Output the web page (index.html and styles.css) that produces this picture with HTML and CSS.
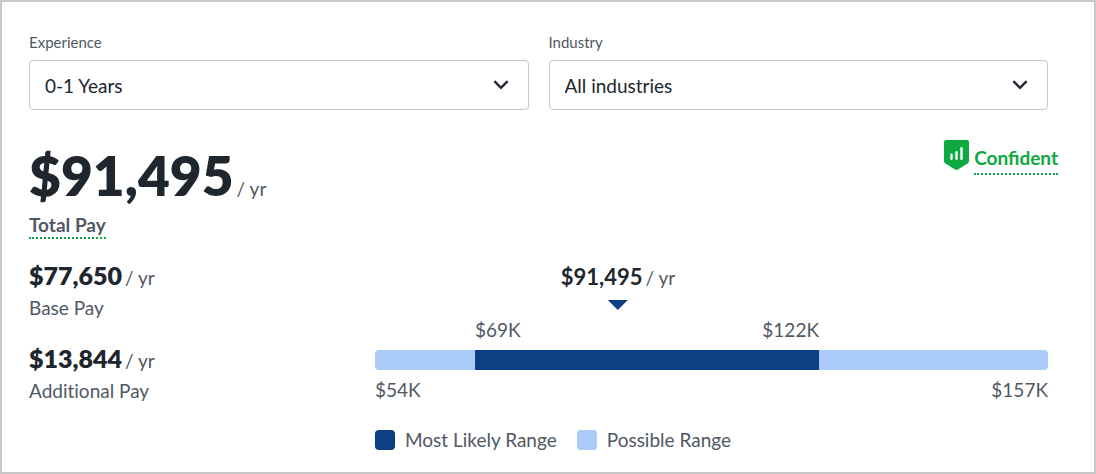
FILE: index.html
```html
<!DOCTYPE html>
<html lang="en">
<head>
  <meta charset="utf-8">
  <meta name="viewport" content="width=device-width, initial-scale=1">
  <title>Total Pay</title>
  <link rel="stylesheet" href="styles.css">
</head>
<body>
  <main class="card">
    <form class="filters">
      <div class="field">
        <label class="field-label" for="experience">Experience</label>
        <div class="select-wrap">
          <select class="select" id="experience"><option>0-1 Years</option></select>
          <svg class="chevron" viewBox="0 0 16 10" aria-hidden="true"><path d="M1.4 1.2 8 7.8l6.600-6.600"/></svg>
        </div>
      </div>
      <div class="field">
        <label class="field-label" for="industry">Industry</label>
        <div class="select-wrap">
          <select class="select" id="industry"><option>All industries</option></select>
          <svg class="chevron" viewBox="0 0 16 10" aria-hidden="true"><path d="M1.4 1.2 8 7.8l6.600-6.600"/></svg>
        </div>
      </div>
    </form>

    <section class="summary">
      <div class="total">
        <div class="amount total-amount"><strong class="total-value">$91,495</strong> <span class="unit">/ yr</span></div>
        <button class="hint" type="button">Total Pay</button>
      </div>
      <div class="confidence">
        <svg class="shield" viewBox="0 0 25 30" aria-hidden="true">
          <path class="shield-body" d="M2 0h21a2 2 0 0 1 2 2v18.500c0 1.500-.6 2.500-1.800 3.300l-9.300 5.700c-.9.600-1.900.6-2.800 0l-9.300-5.700C.6 23 0 22 0 20.500V2a2 2 0 0 1 2-2z"/>
          <path class="shield-bars" d="M7.500 14.800v4M12.500 12.300v6.500M17.500 8.300v10.500"/>
        </svg>
        <button class="hint hint-green" type="button">Confident</button>
      </div>
    </section>

    <section class="details">
      <div class="breakdown">
        <div class="pay">
          <div class="amount pay-amount"><strong class="pay-value">$77,650</strong> <span class="unit">/ yr</span></div>
          <div class="pay-name">Base Pay</div>
        </div>
        <div class="pay">
          <div class="amount pay-amount"><strong class="pay-value">$13,844</strong> <span class="unit">/ yr</span></div>
          <div class="pay-name">Additional Pay</div>
        </div>
      </div>

      <div class="chart">
        <div class="marker" style="margin-left: 36.1%">
          <div class="amount"><span class="marker-value">$91,495</span> <span class="unit">/ yr</span></div>
          <div class="marker-arrow"></div>
        </div>
        <div class="range">
          <div class="likely-ends"><span>$69K</span><span>$122K</span></div>
          <div class="bar bar-low"></div>
          <div class="bar bar-likely"></div>
          <div class="bar bar-high"></div>
        </div>
        <div class="possible-ends"><span>$54K</span><span>$157K</span></div>
        <ul class="legend">
          <li class="legend-item"><span class="swatch swatch-likely"></span>Most Likely Range</li>
          <li class="legend-item"><span class="swatch swatch-possible"></span>Possible Range</li>
        </ul>
      </div>
    </section>
  </main>
</body>
</html>
```

FILE: styles.css
```css
* {
  box-sizing: border-box;
}

body {
  margin: 0;
  background: #fff;
  color: #505863;
  font: 19px/24px Lato, sans-serif;
}

.card {
  min-height: 100vh;
  padding: 30px 46px 20px 27px;
  border: 2px solid #c8c8c8;
}

.filters {
  display: grid;
  grid-template-columns: 1fr 1fr;
  gap: 20px;
}

.field {
  display: grid;
  gap: 8px;
}

.field-label {
  font-size: 15px;
  line-height: 20px;
}

.select-wrap {
  display: grid;
  align-items: center;
}

.select,
.chevron {
  grid-area: 1 / 1;
}

.select {
  width: 100%;
  height: 50px;
  padding: 2px 48px 0 15px;
  border: 1px solid #c4c7cc;
  border-radius: 4px;
  appearance: none;
  background: #fff;
  color: #20262e;
  font: inherit;
}

.chevron {
  width: 16px;
  height: 10px;
  margin-right: 20px;
  justify-self: end;
  fill: none;
  stroke: #20262e;
  stroke-width: 2.4;
  pointer-events: none;
}

.summary {
  display: flex;
  justify-content: space-between;
  align-items: flex-start;
  margin-top: 30px;
}

.total {
  padding-top: 3px;
}

.amount {
  display: flex;
  align-items: baseline;
  gap: 3px;
}

.total-amount {
  margin-bottom: 6px;
}

.total-value {
  color: #20262e;
  font-size: 55px;
  font-weight: 800;
  line-height: 64px;
}

.hint {
  display: block;
  padding: 0;
  border: 0;
  border-bottom: 2px dotted #0caa41;
  background: none;
  color: inherit;
  font: inherit;
  font-weight: 700;
}

.hint-green {
  margin-top: 6px;
  padding-bottom: 3px;
  color: #0caa41;
}

.confidence {
  display: flex;
  gap: 5px;
  margin-right: -10px;
}

.shield {
  width: 25px;
  height: 30px;
}

.shield-body {
  fill: #0caa41;
}

.shield-bars {
  fill: none;
  stroke: #fff;
  stroke-width: 2.4;
  stroke-linecap: round;
}

.details {
  display: grid;
  grid-template-columns: 346px 1fr;
  margin-top: 21px;
}

.breakdown {
  display: grid;
  gap: 23px;
  align-content: start;
}

.pay-amount {
  margin-bottom: 6px;
}

.pay-value {
  color: #20262e;
  font-size: 25px;
  font-weight: 800;
  line-height: 30px;
}

.pay-name {
  font-variant-ligatures: none;
}

.chart {
  padding-top: 2px;
}

.marker {
  display: grid;
  justify-items: center;
  gap: 8px;
  width: max-content;
  transform: translateX(-50%);
}

.marker-value {
  color: #20262e;
  font-size: 22px;
  font-weight: 700;
  line-height: 30px;
}

.marker-arrow {
  border: 10px solid transparent;
  border-top-color: #0d3f84;
  border-bottom: 0;
}

.range {
  display: grid;
  grid-template-columns: 100fr 344fr 229fr;
  row-gap: 8px;
  margin-top: 8px;
}

.likely-ends {
  grid-column: 2;
}

.likely-ends,
.possible-ends {
  display: flex;
  justify-content: space-between;
}

.bar {
  grid-row: 2;
  height: 20px;
  background: #aacbf7;
}

.bar-low {
  border-radius: 4px 0 0 4px;
}

.bar-likely {
  background: #0d3f84;
}

.bar-high {
  border-radius: 0 4px 4px 0;
}

.possible-ends {
  margin-top: 8px;
}

.legend {
  display: flex;
  gap: 20px;
  margin: 26px 0 0;
  padding: 0;
  list-style: none;
}

.legend-item {
  display: flex;
  align-items: center;
  gap: 10px;
}

.swatch {
  width: 20px;
  height: 20px;
  border-radius: 4px;
}

.swatch-likely {
  background: #0d3f84;
}

.swatch-possible {
  background: #aacbf7;
}
```
